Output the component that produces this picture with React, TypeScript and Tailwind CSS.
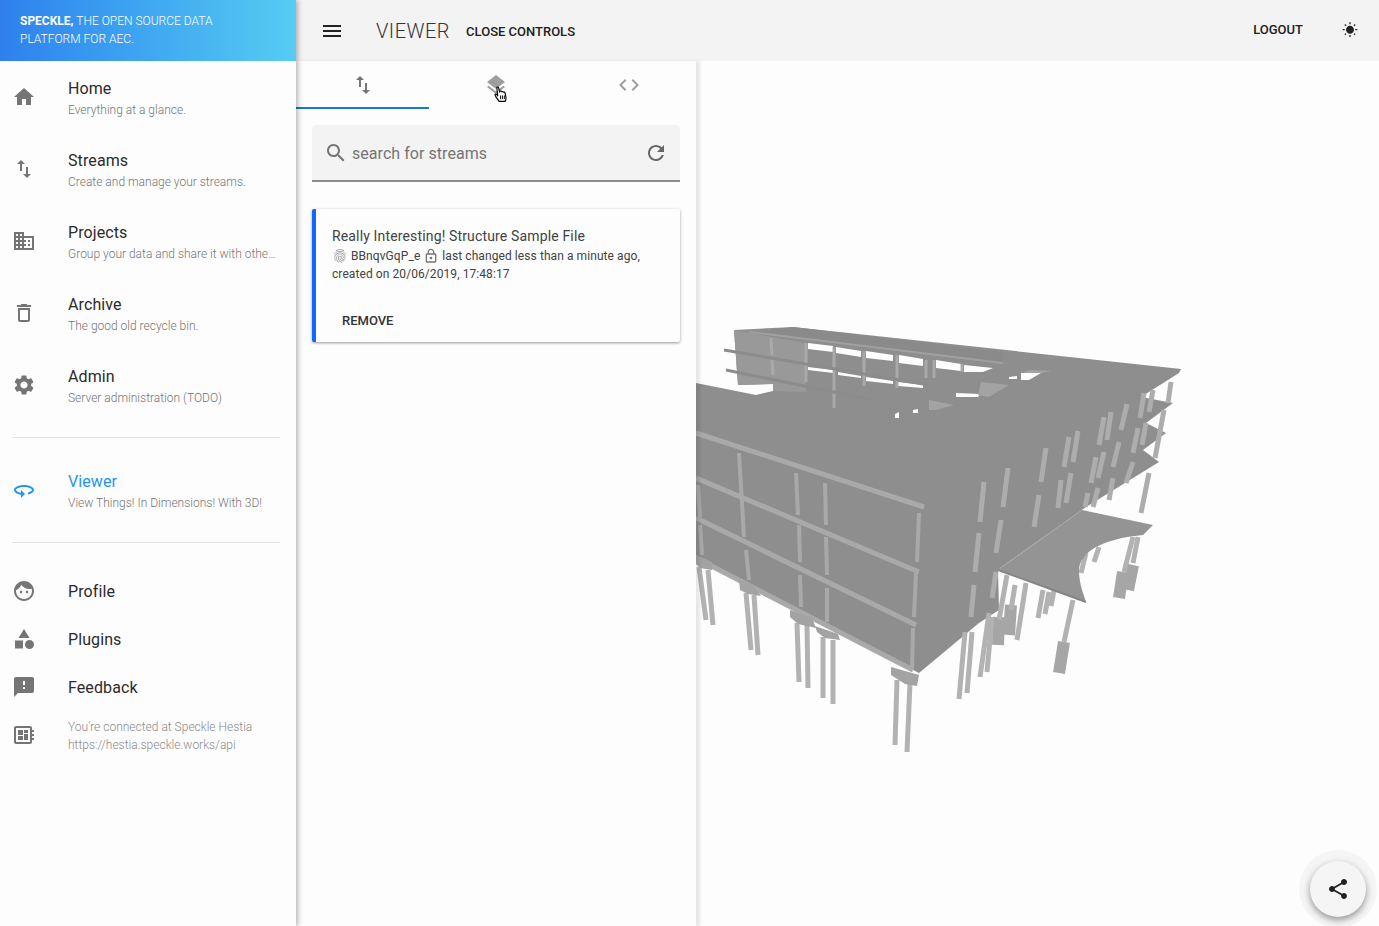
import type { ReactNode } from 'react';

const P = {
  home: 'M10 20v-6h4v6h5v-8h3L12 3 2 12h3v8z',
  swap: 'M16 17.01V10h-2v7.01h-3L15 21l4-3.99h-3zM9 3L5 6.99h3V14h2V6.99h3L9 3z',
  domain: 'M12 7V3H2v18h20V7H12zM6 19H4v-2h2v2zm0-4H4v-2h2v2zm0-4H4V9h2v2zm0-4H4V5h2v2zm4 12H8v-2h2v2zm0-4H8v-2h2v2zm0-4H8V9h2v2zm0-4H8V5h2v2zm10 12h-8v-2h2v-2h-2v-2h2v-2h-2V9h8v10zm-2-8h-2v2h2v-2zm0 4h-2v2h2v-2z',
  trash: 'M6 19c0 1.1.9 2 2 2h8c1.1 0 2-.9 2-2V7H6v12zM8 9h8v10H8V9zm7.5-5l-1-1h-5l-1 1H5v2h14V4z',
  gear: 'M19.14 12.94c.04-.3.06-.61.06-.94 0-.32-.02-.64-.07-.94l2.03-1.58c.18-.14.23-.41.12-.61l-1.92-3.32c-.12-.22-.37-.29-.59-.22l-2.39.96c-.5-.38-1.03-.7-1.62-.94l-.36-2.54c-.04-.24-.24-.41-.48-.41h-3.84c-.24 0-.43.17-.47.41l-.36 2.54c-.59.24-1.13.57-1.62.94l-2.39-.96c-.22-.08-.47 0-.59.22L2.74 8.87c-.12.21-.08.47.12.61l2.03 1.58c-.05.3-.09.63-.09.94s.02.64.07.94l-2.03 1.58c-.18.14-.23.41-.12.61l1.92 3.32c.12.22.37.29.59.22l2.39-.96c.5.38 1.03.7 1.62.94l.36 2.54c.05.24.24.41.48.41h3.84c.24 0 .44-.17.47-.41l.36-2.54c.59-.24 1.13-.56 1.62-.94l2.39.96c.22.08.47 0 .59-.22l1.92-3.32c.12-.22.07-.47-.12-.61l-2.01-1.58zM12 15.6c-1.98 0-3.6-1.62-3.6-3.6s1.62-3.6 3.6-3.6 3.6 1.62 3.6 3.6-1.62 3.6-3.6 3.6z',
  orbit: 'M12 7C6.48 7 2 9.24 2 12c0 2.24 2.94 4.13 7 4.77V20l4-4-4-4v2.73c-3.15-.56-5-1.9-5-2.73 0-1.06 3.04-3 8-3s8 1.94 8 3c0 .73-1.46 1.89-4 2.53v2.05c3.53-.77 6-2.53 6-4.58 0-2.76-4.48-5-10-5z',
  face: 'M9 11.75c-.69 0-1.25.56-1.25 1.25s.56 1.25 1.25 1.25 1.25-.56 1.25-1.25-.56-1.25-1.25-1.25zm6 0c-.69 0-1.25.56-1.25 1.25s.56 1.25 1.25 1.25 1.25-.56 1.25-1.25-.56-1.25-1.25-1.25zM12 2C6.48 2 2 6.48 2 12s4.48 10 10 10 10-4.48 10-10S17.52 2 12 2zm0 18c-4.41 0-8-3.59-8-8 0-.29.02-.58.05-.86 2.36-1.05 4.23-2.98 5.21-5.37C11.07 8.33 14.05 10 17.42 10c.78 0 1.53-.09 2.25-.26.21.71.33 1.47.33 2.26 0 4.41-3.59 8-8 8z',
  shapes: 'M12 2l-5.5 9h11zM17.5 13a4.5 4.5 0 1 0 0 9 4.5 4.5 0 0 0 0-9zM3 13.5h8v8H3z',
  feedback: 'M20 2H4c-1.1 0-1.99.9-1.99 2L2 22l4-4h14c1.1 0 2-.9 2-2V4c0-1.1-.9-2-2-2zm-7 12h-2v-2h2v2zm0-4h-2V6h2v4z',
  board: 'M22 9V7h-2V5c0-1.1-.9-2-2-2H4c-1.1 0-2 .9-2 2v14c0 1.1.9 2 2 2h14c1.1 0 2-.9 2-2v-2h2v-2h-2v-2h2v-2h-2V9h2zm-4 10H4V5h14v14zM6 13h5v4H6zm6-6h4v3h-4zM6 7h5v5H6zm6 4h4v6h-4z',
  layers: 'M11.99 18.54l-7.37-5.73L3 14.07l9 7 9-7-1.63-1.27-7.38 5.74zM12 16l7.36-5.73L21 9l-9-7-9 7 1.63 1.27L12 16z',
  code: 'M9.4 16.6L4.8 12l4.6-4.6L8 6l-6 6 6 6 1.4-1.4zm5.2 0l4.6-4.6-4.6-4.6L16 6l6 6-6 6-1.4-1.4z',
  search: 'M15.5 14h-.79l-.28-.27C15.41 12.59 16 11.11 16 9.5 16 5.91 13.09 3 9.5 3S3 5.91 3 9.5 5.91 16 9.5 16c1.61 0 3.09-.59 4.23-1.57l.27.28v.79l5 4.99L20.49 19l-4.99-5zm-6 0C7.01 14 5 11.99 5 9.5S7.01 5 9.5 5 14 7.01 14 9.5 11.99 14 9.5 14z',
  refresh: 'M17.65 6.35C16.2 4.9 14.21 4 12 4c-4.42 0-7.99 3.58-7.99 8s3.57 8 7.99 8c3.73 0 6.84-2.55 7.73-6h-2.08c-.82 2.33-3.04 4-5.65 4-3.31 0-6-2.69-6-6s2.69-6 6-6c1.66 0 3.14.69 4.22 1.78L13 11h7V4l-2.35 2.35z',
  menu: 'M3 18h18v-2H3v2zm0-5h18v-2H3v2zm0-7v2h18V6H3z',
  sun: 'M6.76 4.84l-1.8-1.79-1.41 1.41 1.79 1.79 1.42-1.41zM4 10.5H1v2h3v-2zm9-9.95h-2V3.5h2V.55zm7.45 3.91l-1.41-1.41-1.79 1.79 1.41 1.41 1.79-1.79zm-3.21 13.7l1.79 1.8 1.41-1.41-1.8-1.79-1.4 1.4zM20 10.5v2h3v-2h-3zm-8-5c-3.31 0-6 2.69-6 6s2.69 6 6 6 6-2.69 6-6-2.69-6-6-6zm-1 16.95h2V19.5h-2v2.95zm-7.45-3.91l1.41 1.41 1.79-1.8-1.41-1.41-1.79 1.8z',
  share: 'M18 16.08c-.76 0-1.44.3-1.96.77L8.91 12.7c.05-.23.09-.46.09-.7s-.04-.47-.09-.7l7.05-4.11c.54.5 1.25.81 2.04.81 1.66 0 3-1.34 3-3s-1.34-3-3-3-3 1.34-3 3c0 .24.04.47.09.7L8.04 9.81C7.5 9.31 6.79 9 6 9c-1.66 0-3 1.34-3 3s1.34 3 3 3c.79 0 1.5-.31 2.04-.81l7.12 4.16c-.05.21-.08.43-.08.65 0 1.61 1.31 2.92 2.92 2.92 1.61 0 2.92-1.31 2.92-2.92s-1.31-2.92-2.92-2.92z',
  finger: 'M17.81 4.47c-.08 0-.16-.02-.23-.06C15.66 3.42 14 3 12.01 3c-1.98 0-3.86.47-5.57 1.41-.24.13-.54.04-.68-.2-.13-.24-.04-.55.2-.68C7.82 2.52 9.86 2 12.01 2c2.13 0 3.99.47 6.03 1.52.25.13.34.43.21.67-.09.18-.26.28-.44.28zM3.5 9.72c-.1 0-.2-.03-.29-.09-.23-.16-.28-.47-.12-.7.99-1.4 2.25-2.5 3.75-3.27C9.98 4.04 14 4.03 17.15 5.65c1.5.77 2.76 1.86 3.75 3.25.16.22.11.54-.12.7-.23.16-.54.11-.7-.12-.9-1.26-2.04-2.25-3.39-2.94-2.87-1.47-6.54-1.47-9.4.01-1.36.7-2.5 1.7-3.4 2.96-.08.14-.23.21-.39.21zm6.25 12.07c-.13 0-.26-.05-.35-.15-.87-.87-1.34-1.43-2.01-2.64-.69-1.23-1.05-2.73-1.05-4.34 0-2.97 2.54-5.39 5.66-5.39s5.66 2.42 5.66 5.39c0 .28-.22.5-.5.5s-.5-.22-.5-.5c0-2.42-2.09-4.39-4.66-4.39-2.57 0-4.66 1.97-4.66 4.39 0 1.44.32 2.77.93 3.85.64 1.15 1.08 1.64 1.85 2.42.19.2.19.51 0 .71-.11.1-.24.15-.37.15zm7.17-1.85c-1.19 0-2.24-.3-3.1-.89-1.49-1.01-2.38-2.65-2.38-4.39 0-.28.22-.5.5-.5s.5.22.5.5c0 1.41.72 2.74 1.94 3.56.71.48 1.54.71 2.54.71.24 0 .64-.03 1.04-.1.27-.05.53.13.58.41.05.27-.13.53-.41.58-.57.11-1.07.12-1.21.12zM14.91 22c-.04 0-.09-.01-.13-.02-1.59-.44-2.63-1.03-3.72-2.1-1.4-1.39-2.17-3.24-2.17-5.22 0-1.62 1.38-2.94 3.08-2.94 1.7 0 3.08 1.32 3.08 2.94 0 1.07.93 1.94 2.08 1.94s2.08-.87 2.08-1.94c0-3.77-3.25-6.83-7.25-6.83-2.84 0-5.44 1.58-6.61 4.03-.39.81-.59 1.76-.59 2.8 0 .78.07 2.01.67 3.61.1.26-.03.55-.29.64-.26.1-.55-.04-.64-.29-.49-1.31-.73-2.61-.73-3.96 0-1.2.23-2.29.68-3.24 1.33-2.79 4.28-4.6 7.51-4.6 4.55 0 8.25 3.51 8.25 7.83 0 1.62-1.38 2.94-3.08 2.94s-3.08-1.32-3.08-2.94c0-1.07-.93-1.94-2.08-1.94s-2.08.87-2.08 1.94c0 1.71.66 3.31 1.87 4.51.95.94 1.86 1.46 3.27 1.85.27.07.42.35.35.61-.05.23-.26.38-.47.38z',
  lock: 'M12 17c1.1 0 2-.9 2-2s-.9-2-2-2-2 .9-2 2 .9 2 2 2zm6-9h-1V6c0-2.76-2.24-5-5-5S7 3.24 7 6v2H6c-1.1 0-2 .9-2 2v10c0 1.1.9 2 2 2h12c1.1 0 2-.9 2-2V10c0-1.1-.9-2-2-2zM8.9 6c0-1.71 1.39-3.1 3.1-3.1s3.1 1.39 3.1 3.1v2H8.9V6zM18 20H6V10h12v10z',
};

function Icon({ d, className }: { d: string; className: string }) {
  return (
    <svg viewBox="0 0 24 24" className={className} fill="currentColor">
      <path d={d} />
    </svg>
  );
}

const MAIN_NAV = [
  { icon: P.home, title: 'Home', sub: 'Everything at a glance.' },
  { icon: P.swap, title: 'Streams', sub: 'Create and manage your streams.' },
  { icon: P.domain, title: 'Projects', sub: 'Group your data and share it with others.' },
  { icon: P.trash, title: 'Archive', sub: 'The good old recycle bin.' },
  { icon: P.gear, title: 'Admin', sub: 'Server administration (TODO)' },
];

function NavTile({ icon, title, sub, active }: { icon: string; title: string; sub: string; active?: boolean }) {
  return (
    <div className="flex h-[72px] items-center pr-[17px] pl-3">
      <Icon d={icon} className={`h-6 w-6 shrink-0 ${active ? 'text-[#2196f3]' : 'text-[#757575]'}`} />
      <div className="ml-8 min-w-0 flex-1 pt-[4px]">
        <div className={`h-[21px] text-base leading-[22px] tracking-[0.1px] ${active ? 'text-[#2196f3]' : 'text-[#2b2b2b]'}`}>{title}</div>
        <div className="truncate text-xs leading-[22px] font-light text-[#757575]">{sub}</div>
      </div>
    </div>
  );
}

function SimpleTile({ icon, title }: { icon: string; title: string }) {
  return (
    <div className="flex h-12 items-center pl-3 pr-4">
      <Icon d={icon} className="h-6 w-6 shrink-0 text-[#757575]" />
      <div className="ml-8 translate-y-px text-base tracking-[0.1px] text-[#2b2b2b]">{title}</div>
    </div>
  );
}

function Sidebar() {
  return (
    <aside className="relative z-20 flex h-full w-[296px] shrink-0 flex-col bg-[#fdfdfd] shadow-[2px_0_5px_rgba(0,0,0,0.28)]">
      <div className="h-[61px] bg-gradient-to-r from-[#2f80ed] to-[#56ccf2] px-5 pt-[12px] text-xs leading-[18px] font-light text-white">
        <b className="font-bold">SPECKLE,</b> THE OPEN SOURCE DATA
        <br />
        PLATFORM FOR AEC.
      </div>
      {MAIN_NAV.map(n => (
        <NavTile key={n.title} {...n} />
      ))}
      <div className="mt-4 mr-4 ml-3 border-t border-[#e2e2e2]" />
      <div className="mt-4">
        <NavTile icon={P.orbit} title="Viewer" sub="View Things! In Dimensions! With 3D!" active />
      </div>
      <div className="mt-4 mr-4 ml-3 border-t border-[#e2e2e2]" />
      <div className="mt-6">
        <SimpleTile icon={P.face} title="Profile" />
        <SimpleTile icon={P.shapes} title="Plugins" />
        <SimpleTile icon={P.feedback} title="Feedback" />
      </div>
      <div className="flex h-12 items-center pl-3 pr-4">
        <Icon d={P.board} className="h-6 w-6 shrink-0 text-[#757575]" />
        <div className="ml-8 translate-y-px text-xs leading-[18px] font-light text-[#8a8a8a]">
          You're connected at Speckle Hestia
          <br />
          https://hestia.speckle.works/api
        </div>
      </div>
    </aside>
  );
}

function TopBar() {
  return (
    <header className="flex h-[61px] shrink-0 items-center bg-[#f3f3f3] pr-[21px] pl-6 text-[#212121]">
      <Icon d={P.menu} className="h-6 w-6" />
      <div className="ml-[32px] text-[20px] font-light tracking-[0.5px] text-[#333]">VIEWER</div>
      <div className="ml-4 translate-y-px text-[13px] font-medium">CLOSE CONTROLS</div>
      <div className="ml-auto -translate-y-px text-[13px] font-medium">LOGOUT</div>
      <Icon d={P.sun} className="ml-[39px] h-4 w-4 -translate-y-px text-[#222]" />
    </header>
  );
}

function Tab({ children, active }: { children: ReactNode; active?: boolean }) {
  return (
    <div className={`flex h-12 flex-1 items-center justify-center border-b-2 ${active ? 'border-[#1976d2]' : 'border-transparent'}`}>
      {children}
    </div>
  );
}

function Controls() {
  return (
    <section className="relative z-10 flex h-full w-[400px] shrink-0 flex-col bg-[#fdfdfd] shadow-[4px_0_3px_rgba(0,0,0,0.09)]">
      <div className="flex">
        <Tab active>
          <Icon d={P.swap} className="h-6 w-6 translate-y-px text-[#757575]" />
        </Tab>
        <Tab>
          <Icon d={P.layers} className="h-6 w-6 translate-y-px text-[#9e9e9e]" />
        </Tab>
        <Tab>
          <Icon d={P.code} className="h-6 w-6 translate-y-px text-[#9e9e9e]" />
        </Tab>
      </div>

      <div className="mx-4 mt-4 flex h-[57px] items-center rounded-t border-b-2 border-[#8c8c8c] bg-[#f3f3f3] pr-3 pl-[12px]">
        <Icon d={P.search} className="h-6 w-6 text-[#757575]" />
        <span className="ml-1 translate-y-px text-base tracking-[0.05px] text-[#757575]">search for streams</span>
        <Icon d={P.refresh} className="ml-auto h-6 w-6 text-[#666]" />
      </div>

      <div className="mx-4 mt-[27px] h-[133px] rounded-[2px] border-l-4 border-[#1565ff] bg-[#fdfdfd] pt-[18px] pl-4 text-[#424242] shadow-[0_1px_3px_rgba(0,0,0,0.4)]">
        <div className="text-sm leading-[18px] tracking-[0.15px]">Really Interesting! Structure Sample File</div>
        <div className="pt-[2px] text-xs leading-[18px] tracking-[0.08px]">
          <div className="flex items-center">
            <Icon d={P.finger} className="h-4 w-4 text-[#8f8f8f]" />
            <span className="ml-[3px]">BBnqvGqP_e</span>
            <Icon d={P.lock} className="ml-[3px] h-4 w-4 text-[#757575]" />
            <span className="ml-[3px]">last changed less than a minute ago,</span>
          </div>
          <div>created on 20/06/2019, 17:48:17</div>
        </div>
        <div className="mt-[28px] ml-[10px] text-[13px] font-medium text-[#333]">REMOVE</div>
      </div>
    </section>
  );
}

// the model, screen coordinates (svg starts at x=696, y=61)
const FRONT_BEAMS = [
  [696, 433, 924, 507],
  [696, 478, 919, 572],
  [696, 518, 916, 625],
  [696, 558, 913, 670],
];
const FRONT_COLUMNS = [
  [739, 453, 744, 537], [746, 550, 749, 580], [796, 473, 798, 515], [799, 525, 800, 562],
  [800, 575, 801, 607], [825, 483, 826, 525], [826, 537, 827, 575], [827, 588, 827, 622],
  [919, 513, 917, 562], [916, 573, 914, 617], [913, 628, 912, 668], [698, 485, 700, 517],
  [700, 525, 702, 555],
];
const RIGHT_COLUMNS = [
  [984, 482, 980, 522], [1008, 468, 1003, 507], [1046, 448, 1041, 482], [1069, 437, 1064, 467],
  [1078, 431, 1073, 462], [1104, 417, 1099, 445], [1111, 412, 1107, 440], [1127, 404, 1121, 430],
  [1144, 393, 1140, 418], [1153, 390, 1149, 412], [1171, 382, 1168, 403],
  [1039, 495, 1034, 527], [1061, 480, 1058, 508], [1071, 473, 1066, 503], [1096, 457, 1091, 483],
  [1104, 452, 1098, 478], [1119, 442, 1113, 467], [1138, 428, 1133, 453], [1146, 423, 1142, 445],
  [1164, 410, 1155, 458], [1001, 520, 996, 553], [979, 533, 975, 572], [974, 585, 971, 617],
  [996, 572, 992, 598], [1113, 478, 1109, 500], [1133, 462, 1126, 483], [1149, 473, 1141, 513],
  [1098, 488, 1093, 507], [1088, 493, 1085, 507],
];
const LEGS = [
  [699, 567, 706, 620], [708, 570, 713, 625], [746, 593, 751, 650], [754, 595, 758, 655],
  [797, 623, 799, 682], [807, 625, 808, 688], [823, 637, 823, 698], [833, 640, 833, 704],
  [897, 680, 895, 745], [910, 683, 907, 752], [965, 632, 959, 699], [972, 632, 967, 693],
  [989, 613, 980, 677], [992, 617, 987, 672], [1007, 575, 999, 620], [1026, 583, 1017, 640],
  [1015, 585, 1011, 610], [1043, 590, 1038, 618], [1049, 592, 1045, 614], [1054, 590, 1051, 606],
  [1073, 600, 1064, 642], [1133, 537, 1124, 572], [1138, 537, 1133, 563], [1099, 547, 1094, 562],
  [1086, 553, 1081, 573],
];
const FOOTINGS = [
  [999, 617, 998, 645], [1011, 605, 1009, 635], [1064, 642, 1059, 673], [1123, 572, 1119, 598],
  [1133, 565, 1128, 590],
];
const UPPER_COLS = [
  [771, 338, 772, 355], [772, 360, 773, 375], [806, 343, 806, 382], [834, 347, 834, 408],
  [864, 351, 864, 386], [897, 355, 897, 388], [926, 360, 926, 378], [934, 360, 934, 378],
  [962, 364, 962, 372],
];
const WINDOWS = [
  '808,343 833,346 833,352 808,349', '836,347 861,351 861,357 836,353', '866,351 893,355 893,361 866,358',
  '899,355 923,359 923,366 899,363', '936,360 961,364 961,371 936,368', '964,365 993,368 983,372 964,372',
  '808,367 833,370 833,373 808,370', '838,372 861,376 861,378 838,375', '866,377 893,381 893,384 866,381',
  '898,382 923,385 923,388 898,386', '1021,373 1041,373 1029,380 1021,380', '1009,377 1017,376 1017,379 1009,379',
  '956,393 980,394 978,397 956,397', '895,414 899,412 899,418 895,418', '913,410 918,409 918,413 913,413',
];
const LIGHT_PATCHES = [
  '1029,370 1052,371 1041,373 1021,373', '981,382 1009,385 989,397 978,395', '929,400 954,405 936,410 929,410',
];

function Building() {
  const beam = (items: number[][], w: number, color: string) =>
    items.map(([a, b, c, d]) => <line key={`${a}-${b}-${c}`} x1={a} y1={b} x2={c} y2={d} stroke={color} strokeWidth={w} />);
  return (
    <svg viewBox="696 61 683 865" className="h-full w-full" fill="none">
      {/* main mass */}
      <polygon
        fill="#8e8e8e"
        points="696,383 756,395 773,391 773,384 738,385 734,330 793,327 1181,369 1179,373 1141,397 1173,403 1146,423 1166,433 1143,450 1159,462 1086,507 998,570 999,610 979,623 919,673 696,558"
      />
      {/* rear block, lighter */}
      <polygon points="734,330 749,333 806,343 806,392 773,391 773,384 738,385" fill="#999999" />
      <polygon points="749,333 793,327 1003,352 1003,363" fill="#8a8a8a" />

      {WINDOWS.map(p => <polygon key={p} points={p} fill="#fdfdfd" />)}
      {LIGHT_PATCHES.map(p => <polygon key={p} points={p} fill="#a3a3a3" />)}
      {beam(UPPER_COLS, 3, '#a9a9a9')}
      <line x1="749" y1="332" x2="1003" y2="363" stroke="#a0a0a0" strokeWidth="2" />
      <line x1="724" y1="350" x2="929" y2="385" stroke="#8c8c8c" strokeWidth="3" />
      <line x1="726" y1="370" x2="873" y2="400" stroke="#8c8c8c" strokeWidth="3" />

      {beam(FOOTINGS, 12, '#a6a6a6')}
      {beam(LEGS, 5, '#b2b2b2')}

      {/* canopy */}
      <path d="M998 570L1082 510 1153 525 1143 535C1120 537 1106 542 1096 547 1085 553 1079 562 1079 570 1079 585 1084 595 1086 602z" fill="#949494" />
      <path d="M998 570L1086 602" stroke="#858585" strokeWidth="2" />
      <path d="M1000 568L1082 510" stroke="#a5a5a5" strokeWidth="1" />

      {beam(FRONT_BEAMS, 5, '#a9a9a9')}
      {beam(FRONT_COLUMNS, 4, '#a9a9a9')}
      {beam(RIGHT_COLUMNS, 5, '#adadad')}

      {/* pile caps */}
      <polygon points="739,580 753,585 761,596 748,594 740,590" fill="#a3a3a3" />
      <polygon points="790,610 812,618 816,628 798,624 790,617" fill="#a3a3a3" />
      <polygon points="815,626 838,634 840,640 825,638 817,632" fill="#a3a3a3" />
      <polygon points="891,667 919,675 917,686 905,684 891,675" fill="#a3a3a3" />
      <polygon points="696,555 712,562 712,570 700,568 696,564" fill="#a3a3a3" />
    </svg>
  );
}

function HandCursor() {
  return (
    <svg viewBox="0 0 16 18" className="absolute top-[85px] left-[198px] z-20 h-[19px] w-[15px]" strokeLinejoin="round">
      <path
        d="M3 1.5c.8-.8 1.9-.4 2 .6L6 6.5l.5-1c.7-.6 1.6-.2 1.7.6.6-.6 1.6-.3 1.8.5.7-.5 1.6-.1 1.8.7l1 5c.2 1.5-.2 2.7-1 4H5.500L2 11.500 1 9c.3-.8 1.300-.8 2 0l1 1.500z"
        fill="#fff"
        stroke="#000"
        strokeWidth="1.200"
      />
      <path d="M7 10v4M9 10v4M11 10v4" stroke="#000" strokeWidth="1" />
    </svg>
  );
}

export default function App() {
  return (
    <div className="flex h-[926px] w-[1379px] overflow-hidden bg-[#fdfdfd] [font-family:Roboto,sans-serif]">
      <Sidebar />
      <div className="relative flex min-w-0 flex-1 flex-col">
        <TopBar />
        <div className="flex min-h-0 flex-1">
          <Controls />
          <div className="min-w-0 flex-1">
            <Building />
          </div>
        </div>
        <HandCursor />
        <div className="absolute right-[2px] bottom-[-2px] z-20 flex h-[78px] w-[78px] items-center justify-center rounded-full bg-[#f5f5f5]">
          <div className="flex h-14 w-14 items-center justify-center rounded-full bg-[#f5f5f5] shadow-[0_3px_7px_rgba(0,0,0,0.4)]">
            <Icon d={P.share} className="h-6 w-6 text-[#212121]" />
          </div>
        </div>
      </div>
    </div>
  );
}
